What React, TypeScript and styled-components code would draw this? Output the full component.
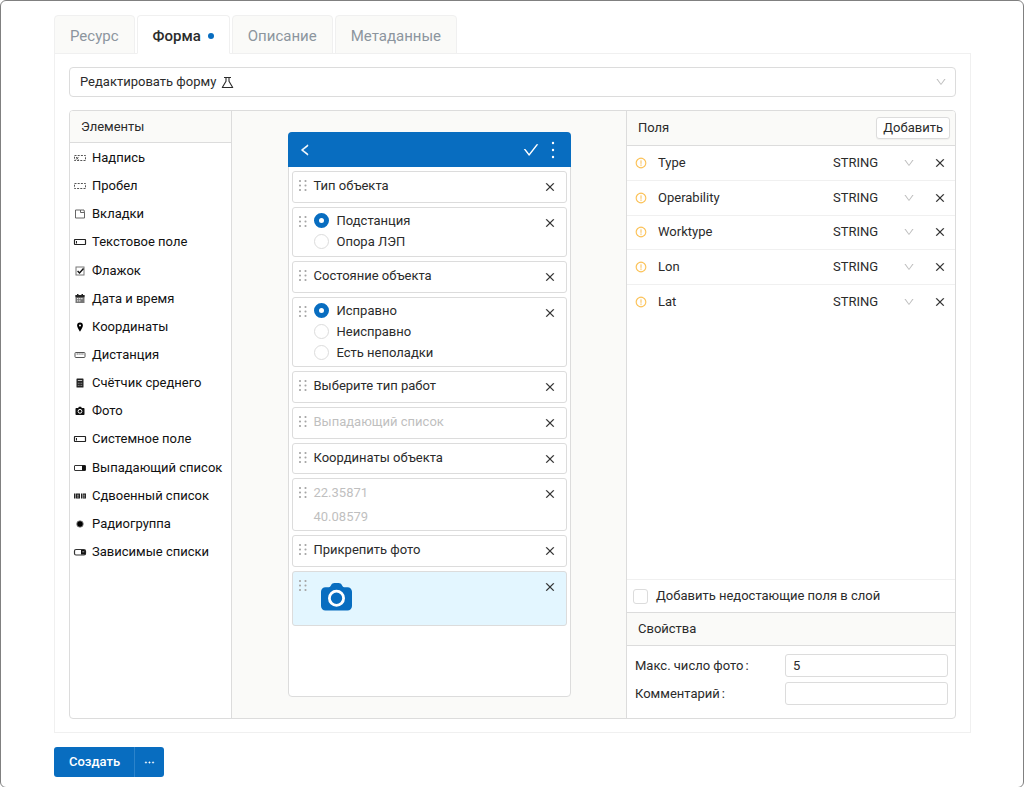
import React, { useState } from "react";
import styled, { createGlobalStyle, css } from "styled-components";
import {
  AiOutlineCheck,
  AiOutlineClose,
  AiOutlineDown,
  AiOutlineEllipsis,
  AiOutlineExclamationCircle,
  AiOutlineLeft,
} from "react-icons/ai";

const c = {
  blue: "#086dc0",
  text: "#2b2b2b",
  muted: "#8c959e",
  faint: "#bfbfbf",
  line: "#dcdcdc",
  soft: "#f0f0f0",
  panel: "#fafaf8",
};

const GlobalStyle = createGlobalStyle`
  * { box-sizing: border-box; }
  body { margin: 0; background: #fff; }
  body, button, input, select {
    font-family: Roboto, "Liberation Sans", sans-serif;
    font-size: 13px;
    line-height: 20px;
    color: ${c.text};
  }
  button { padding: 0; border: 0; background: none; cursor: pointer; }
  svg { display: block; flex: none; }
`;

const Page = styled.div`
  display: flex;
  flex-direction: column;
  min-height: 100vh;
  padding: 14px 52px 10px 53px;
  border: 1px solid #808080;
  border-radius: 6px;
`;

const Tabs = styled.div`
  display: flex;
  gap: 2px;
  margin-bottom: -1px;
`;

const Tab = styled.button<{ $active?: boolean }>`
  display: flex;
  align-items: center;
  gap: 7px;
  height: 39px;
  padding: 2px 15px 0;
  border: 1px solid ${c.soft};
  border-radius: 4px 4px 0 0;
  background: ${c.panel};
  font-size: 15px;
  color: ${c.muted};
  ${(p) =>
    p.$active &&
    css`
      background: #fff;
      border-bottom-color: #fff;
      color: ${c.text};
      font-weight: 500;
      position: relative;
    `}
`;

const TabDot = styled.span`
  width: 6px;
  height: 6px;
  border-radius: 50%;
  background: ${c.blue};
`;

const Content = styled.main`
  flex: 1;
  display: flex;
  flex-direction: column;
  gap: 13px;
  padding: 13px 14px;
  border: 1px solid ${c.soft};
`;

const ModeBox = styled.div`
  position: relative;
  display: flex;
  align-items: center;
`;

const ModeSelect = styled.select`
  appearance: none;
  width: 100%;
  height: 30px;
  padding: 0 10px;
  border: 1px solid ${c.line};
  border-radius: 4px;
  background: #fff;
`;

const ModeFlask = styled.span`
  position: absolute;
  left: 152px;
  pointer-events: none;
`;

const ModeArrow = styled.span`
  position: absolute;
  right: 9px;
  color: ${c.faint};
  pointer-events: none;
`;

const Editor = styled.div`
  flex: 1;
  display: grid;
  grid-template-columns: 161px 1fr 328px;
  border: 1px solid ${c.line};
  border-radius: 4px;
  background: #fff;
  overflow: hidden;
`;

const Column = styled.section`
  display: flex;
  flex-direction: column;
`;

const PanelHead = styled.header<{ $height: number }>`
  display: flex;
  align-items: center;
  justify-content: space-between;
  height: ${(p) => p.$height}px;
  padding: 0 5px 0 11px;
  border-bottom: 1px solid ${c.line};
  background: ${c.panel};
`;

const PanelTitle = styled.h2`
  margin: 0;
  font-size: 13px;
  font-weight: 400;
`;

const ElementList = styled.ul`
  display: grid;
  grid-auto-rows: 1fr;
  height: 422px;
  margin: 1px 0 0;
  padding: 0;
  list-style: none;
`;

const ElementItem = styled.li`
  display: flex;
  align-items: center;
  gap: 5px;
  padding-left: 3px;
  color: #111;
  white-space: nowrap;
`;

const Canvas = styled.section`
  display: flex;
  justify-content: center;
  align-items: flex-start;
  padding: 21px 0;
  border: solid ${c.line};
  border-width: 0 1px;
  background: ${c.panel};
`;

const Phone = styled.div`
  width: 283px;
  height: 565px;
  border: 1px solid ${c.line};
  border-radius: 4px;
  background: #fff;
`;

const PhoneBar = styled.div`
  display: flex;
  align-items: center;
  height: 35px;
  padding: 0 16px 0 10px;
  margin: -1px -1px 0;
  border-radius: 4px 4px 0 0;
  background: ${c.blue};
  color: #fff;
`;

const BarButton = styled.button`
  color: #fff;
  &:first-child { margin-right: auto; }
  &:last-child { margin-left: 11px; }
`;

const Cards = styled.div`
  display: flex;
  flex-direction: column;
  gap: 4px;
  padding: 4px 3px;
`;

const Card = styled.div<{ $height: number; $selected?: boolean }>`
  display: flex;
  align-items: flex-start;
  height: ${(p) => p.$height}px;
  padding: 2px 10px 0 6px;
  border: 1px solid ${c.line};
  border-radius: 3px;
  background: ${(p) => (p.$selected ? "#e3f6ff" : "#fff")};
`;

const Grip = styled.span`
  margin: 6px 7px 0 0;
  color: #a6a6a6;
`;

const CardBody = styled.div<{ $hint?: boolean }>`
  flex: 1;
  color: ${(p) => (p.$hint ? c.faint : c.text)};
`;

const CardLine = styled.div`
  height: 24px;
  line-height: 24px;
`;

const RadioLabel = styled.label`
  display: flex;
  align-items: center;
  gap: 8px;
  height: 21px;
`;

const Radio = styled.input`
  appearance: none;
  width: 15px;
  height: 15px;
  margin: 0;
  border: 1px solid ${c.line};
  border-radius: 50%;
  background: #fff;
  &:checked { border: 5px solid ${c.blue}; }
`;

const PhotoSlot = styled.div`
  padding: 9px 7px;
  color: ${c.blue};
`;

const CloseButton = styled.button<{ $inCard?: boolean }>`
  display: block;
  margin-top: ${(p) => (p.$inCard ? 7 : 0)}px;
`;

const SmallButton = styled.button`
  height: 22px;
  padding: 0 6px;
  border: 1px solid ${c.line};
  border-radius: 3px;
  background: #fff;
  box-shadow: 0 1px 1px rgba(0, 0, 0, 0.04);
`;

const FieldTable = styled.table`
  width: 100%;
  height: 173px;
  border-collapse: collapse;
  td { padding: 0; vertical-align: middle; }
  tr + tr td { border-top: 1px solid ${c.soft}; }
  td:nth-child(1) { width: 31px; padding-left: 8px; }
  td:nth-child(3) { width: 101px; }
  td:nth-child(4) { width: 21px; }
`;

const Warn = styled.span`
  color: #fcc04f;
`;

const TypeBox = styled.div`
  display: flex;
  align-items: center;
  position: relative;
`;

const TypeSelect = styled.select`
  appearance: none;
  width: 85px;
  height: 22px;
  padding: 0;
  border: 0;
  background: transparent;
`;

const TypeArrow = styled.span`
  position: absolute;
  left: 70px;
  color: ${c.faint};
  pointer-events: none;
`;

const MissingRow = styled.label`
  display: flex;
  align-items: center;
  gap: 8px;
  height: 34px;
  margin-top: auto;
  padding-left: 6px;
  border-top: 1px solid ${c.soft};
  border-bottom: 1px solid ${c.line};
`;

const CheckBox = styled.input`
  appearance: none;
  width: 15px;
  height: 15px;
  margin: 0;
  border: 1px solid ${c.line};
  border-radius: 3px;
  background: #fff;
  &:checked { background: ${c.blue}; }
`;

const Props = styled.form`
  display: grid;
  gap: 5px;
  padding: 8px 7px 13px 8px;
`;

const PropRow = styled.label`
  display: grid;
  grid-template-columns: 150px 1fr;
  align-items: center;
`;

const Colon = styled.span`
  margin-left: 2px;
`;

const PropInput = styled.input`
  width: 100%;
  height: 23px;
  padding: 0 7px;
  border: 1px solid ${c.line};
  border-radius: 3px;
`;

const Actions = styled.footer`
  display: flex;
  margin-top: 14px;
`;

const Primary = styled.button`
  display: flex;
  align-items: center;
  height: 30px;
  padding: 0 14px 0 15px;
  border-radius: 3px 0 0 3px;
  background: ${c.blue};
  color: #fff;
  font-weight: 500;
  & + & {
    padding: 0 8px;
    border-left: 1px solid #2b83cb;
    border-radius: 0 3px 3px 0;
  }
`;

const glyphs: Record<string, React.ReactNode> = {
  label: (
    <>
      <rect x="1.5" y="4.5" width="11" height="5" fill="none" stroke="#555" strokeDasharray="2 1.2" />
      <path d="M3 6l2.4 2.6M5.4 6L3 8.6" stroke="#555" />
    </>
  ),
  space: <rect x="1.5" y="4.5" width="11" height="5" fill="none" stroke="#555" strokeDasharray="2 1.2" />,
  tabs: <path d="M2.5 3v8h9V5.5h-4V3zM7.5 3h3.500l.5 2.500" fill="none" stroke="#555" strokeWidth=".9" />,
  text: (
    <>
      <rect x="1.500" y="4.5" width="11" height="5" rx=".4" fill="none" stroke="#222" strokeWidth="1.2" />
      <path d="M3.500 6v2.500" stroke="#222" />
    </>
  ),
  check: (
    <>
      <rect x="3" y="3" width="8" height="8" fill="none" stroke="#777" />
      <path d="M4.600 7l1.900 1.900L10.500 4.500" fill="none" stroke="#111" strokeWidth="1.400" />
    </>
  ),
  date: (
    <>
      <path d="M2.500 3h9v8h-9z" fill="#777" />
      <path d="M2.500 3h9v2.200h-9zM4 2h1.500v2H4zM8.500 2H10v2H8.500z" fill="#222" />
      <path d="M4 6.700h6M4 8.900h4" stroke="#fff" strokeDasharray="1.300 .8" />
    </>
  ),
  pin: (
    <path
      d="M7 2.500a2.900 2.900 0 0 0-2.900 2.900C4.100 7.500 7 11.500 7 11.500s2.900-4 2.900-6.100A2.900 2.900 0 0 0 7 2.500zm0 1.900a1 1 0 1 1 0 2 1 1 0 0 1 0-2z"
      fill="#000"
    />
  ),
  ruler: (
    <>
      <rect x="2" y="4.500" width="10" height="5" rx=".8" fill="none" stroke="#555" />
      <path d="M4.200 5v2M6.100 5v2M8 5v2M9.900 5v2" stroke="#777" strokeWidth=".8" />
    </>
  ),
  calc: (
    <>
      <rect x="3.500" y="2.500" width="7" height="9" rx=".6" fill="#222" />
      <path d="M4.800 4.500h4.400" stroke="#bbb" />
      <path d="M4.800 7.200h4.400M4.800 9.400h4.400" stroke="#999" strokeDasharray="1 .7" />
    </>
  ),
  photo: (
    <>
      <path
        d="M3.500 4h1.700l.7-1.200h2.200L8.800 4h1.700c.6 0 1 .4 1 1v5c0 .6-.4 1-1 1h-7c-.6 0-1-.4-1-1V5c0-.6.4-1 1-1z"
        fill="#111"
      />
      <circle cx="7" cy="7.300" r="1.900" fill="none" stroke="#fff" />
    </>
  ),
  drop: (
    <>
      <rect x="1.500" y="4.500" width="11" height="5" rx=".5" fill="none" stroke="#333" />
      <path d="M9 4.500h3.500v5H9z" fill="#111" />
    </>
  ),
  twin: (
    <>
      <path d="M1 4.500h1.500v5H1zM3 4.500h4v5H3zM8 4.500h1v5H8zM9.500 4.500H13v5H9.500z" fill="#222" />
      <path d="M4 6.200h1.800M4 8h1.800M10.300 6.200h1.800M10.300 8h1.800" stroke="#ccc" strokeWidth=".8" />
    </>
  ),
  radio: <circle cx="7" cy="7" r="3.300" fill="#000" stroke="#999" strokeWidth=".8" />,
  linked: (
    <>
      <rect x="1.500" y="4.500" width="11" height="5.500" rx="1.500" fill="none" stroke="#333" strokeWidth="1.200" />
      <path d="M8 5h3.500l1 1v3.500H8z" fill="#111" />
      <path d="M9.300 6.800h2" stroke="#ccc" strokeWidth=".8" />
    </>
  ),
};

const Glyph = ({ name }: { name: string }) => (
  <svg width="14" height="14" viewBox="0 0 14 14">
    {glyphs[name]}
  </svg>
);

const elements: [string, string][] = [
  ["label", "Надпись"],
  ["space", "Пробел"],
  ["tabs", "Вкладки"],
  ["text", "Текстовое поле"],
  ["check", "Флажок"],
  ["date", "Дата и время"],
  ["pin", "Координаты"],
  ["ruler", "Дистанция"],
  ["calc", "Счётчик среднего"],
  ["photo", "Фото"],
  ["text", "Системное поле"],
  ["drop", "Выпадающий список"],
  ["twin", "Сдвоенный список"],
  ["radio", "Радиогруппа"],
  ["linked", "Зависимые списки"],
];

const fields = ["Type", "Operability", "Worktype", "Lon", "Lat"];

const GripIcon = () => (
  <svg width="8" height="11" viewBox="0 0 8 11" fill="currentColor">
    {[0, 4.5, 9].map((y) => (
      <React.Fragment key={y}>
        <rect x="0" y={y} width="2" height="2" rx=".8" />
        <rect x="5.500" y={y} width="2" height="2" rx=".8" />
      </React.Fragment>
    ))}
  </svg>
);

const MoreIcon = () => (
  <svg width="4" height="18" viewBox="0 0 4 18" fill="currentColor">
    <circle cx="2" cy="2" r="1.200" />
    <circle cx="2" cy="9" r="1.200" />
    <circle cx="2" cy="16" r="1.200" />
  </svg>
);

const FlaskIcon = () => (
  <svg width="13" height="13" viewBox="0 0 13 13" fill="none" stroke="currentColor" strokeWidth="1.100">
    <path d="M3 1.500h7M5 1.500v3.700L1.300 11.500h10.400L8 5.200V1.500" strokeLinejoin="round" />
  </svg>
);

const CameraIcon = () => (
  <svg width="31" height="28" viewBox="0 0 31 28">
    <path
      d="M4.500 4.200h3.300c.7 0 1.200-.3 1.600-.9l.8-1.400C10.900.7 12 0 13.400 0h4.200c1.400 0 2.500.7 3.200 1.900l.8 1.400c.4.600.9.900 1.600.9h3.300C29 4.200 31 6.200 31 8.700v14.400c0 2.500-2 4.500-4.500 4.500h-22C2 27.600 0 25.600 0 23.100V8.700c0-2.500 2-4.500 4.500-4.500z"
      fill="currentColor"
    />
    <circle cx="15.500" cy="15.200" r="7.100" fill="none" stroke="#fff" strokeWidth="2.800" />
  </svg>
);

const CloseIcon = () => <AiOutlineClose size={12} stroke="currentColor" strokeWidth={16} />;

type CardProps = { height: number; hint?: boolean; selected?: boolean; children: React.ReactNode };

const FormCard = ({ height, hint, selected, children }: CardProps) => (
  <Card $height={height} $selected={selected}>
    <Grip>
      <GripIcon />
    </Grip>
    <CardBody $hint={hint}>{children}</CardBody>
    <CloseButton type="button" aria-label="Удалить элемент" $inCard>
      <CloseIcon />
    </CloseButton>
  </Card>
);

const TextCard = ({ height, hint, lines }: { height: number; hint?: boolean; lines: string[] }) => (
  <FormCard height={height} hint={hint}>
    {lines.map((line) => (
      <CardLine key={line}>{line}</CardLine>
    ))}
  </FormCard>
);

const RadioGroup = ({ name, options }: { name: string; options: string[] }) => (
  <>
    {options.map((o, i) => (
      <RadioLabel key={o}>
        <Radio type="radio" name={name} defaultChecked={i === 0} />
        {o}
      </RadioLabel>
    ))}
  </>
);

export default function App() {
  const [tab, setTab] = useState("Форма");
  return (
    <>
      <GlobalStyle />
      <Page>
        <Tabs role="tablist">
          {["Ресурс", "Форма", "Описание", "Метаданные"].map((t) => (
            <Tab key={t} type="button" role="tab" aria-selected={t === tab} $active={t === tab} onClick={() => setTab(t)}>
              {t}
              {t === "Форма" && <TabDot />}
            </Tab>
          ))}
        </Tabs>
        <Content>
          <ModeBox>
            <ModeSelect aria-label="Режим">
              <option>Редактировать форму</option>
            </ModeSelect>
            <ModeFlask>
              <FlaskIcon />
            </ModeFlask>
            <ModeArrow>
              <AiOutlineDown size={12} />
            </ModeArrow>
          </ModeBox>
          <Editor>
            <Column>
              <PanelHead $height={32}>
                <PanelTitle>Элементы</PanelTitle>
              </PanelHead>
              <ElementList>
                {elements.map(([icon, name]) => (
                  <ElementItem key={name}>
                    <Glyph name={icon} />
                    {name}
                  </ElementItem>
                ))}
              </ElementList>
            </Column>
            <Canvas>
              <Phone>
                <PhoneBar>
                  <BarButton type="button" aria-label="Назад">
                    <AiOutlineLeft size={14} stroke="currentColor" strokeWidth={40} />
                  </BarButton>
                  <BarButton type="button" aria-label="Готово">
                    <AiOutlineCheck size={18} />
                  </BarButton>
                  <BarButton type="button" aria-label="Ещё">
                    <MoreIcon />
                  </BarButton>
                </PhoneBar>
                <Cards>
                  <TextCard height={32} lines={["Тип объекта"]} />
                  <FormCard height={50}>
                    <RadioGroup name="type" options={["Подстанция", "Опора ЛЭП"]} />
                  </FormCard>
                  <TextCard height={32} lines={["Состояние объекта"]} />
                  <FormCard height={70}>
                    <RadioGroup name="state" options={["Исправно", "Неисправно", "Есть неполадки"]} />
                  </FormCard>
                  <TextCard height={32} lines={["Выберите тип работ"]} />
                  <TextCard height={32} hint lines={["Выпадающий список"]} />
                  <TextCard height={31} lines={["Координаты объекта"]} />
                  <TextCard height={53} hint lines={["22.35871", "40.08579"]} />
                  <TextCard height={32} lines={["Прикрепить фото"]} />
                  <FormCard height={55} selected>
                    <PhotoSlot>
                      <CameraIcon />
                    </PhotoSlot>
                  </FormCard>
                </Cards>
              </Phone>
            </Canvas>
            <Column>
              <PanelHead $height={35}>
                <PanelTitle>Поля</PanelTitle>
                <SmallButton type="button">Добавить</SmallButton>
              </PanelHead>
              <FieldTable>
                <tbody>
                  {fields.map((f) => (
                    <tr key={f}>
                      <td>
                        <Warn>
                          <AiOutlineExclamationCircle size={12} stroke="currentColor" strokeWidth={16} />
                        </Warn>
                      </td>
                      <td>{f}</td>
                      <td>
                        <TypeBox>
                          <TypeSelect aria-label={f}>
                            <option>STRING</option>
                          </TypeSelect>
                          <TypeArrow>
                            <AiOutlineDown size={12} />
                          </TypeArrow>
                        </TypeBox>
                      </td>
                      <td>
                        <CloseButton type="button" aria-label="Удалить поле">
                          <CloseIcon />
                        </CloseButton>
                      </td>
                    </tr>
                  ))}
                </tbody>
              </FieldTable>
              <MissingRow>
                <CheckBox type="checkbox" />
                Добавить недостающие поля в слой
              </MissingRow>
              <PanelHead $height={33}>
                <PanelTitle>Свойства</PanelTitle>
              </PanelHead>
              <Props>
                <PropRow>
                  <span>
                    Макс. число фото<Colon>:</Colon>
                  </span>
                  <PropInput defaultValue="5" />
                </PropRow>
                <PropRow>
                  <span>
                    Комментарий<Colon>:</Colon>
                  </span>
                  <PropInput />
                </PropRow>
              </Props>
            </Column>
          </Editor>
        </Content>
        <Actions>
          <Primary type="button">Создать</Primary>
          <Primary type="button" aria-label="Другие действия">
            <AiOutlineEllipsis size={13} stroke="currentColor" strokeWidth={40} />
          </Primary>
        </Actions>
      </Page>
    </>
  );
}
